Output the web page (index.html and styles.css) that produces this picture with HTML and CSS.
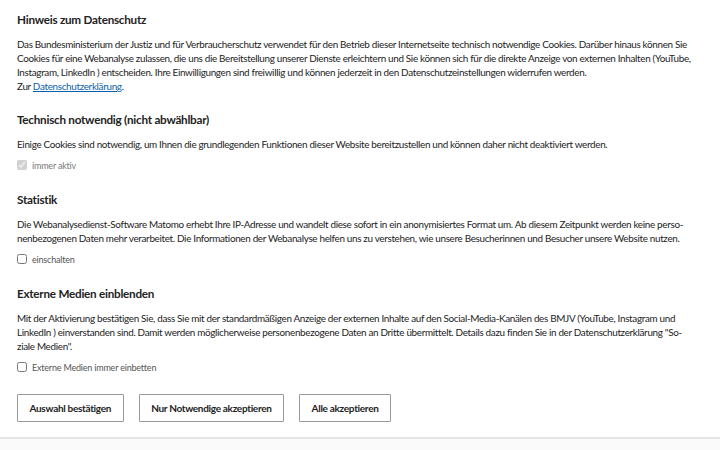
FILE: index.html
```html
<!DOCTYPE html>
<html lang="de">
<head>
    <meta charset="UTF-8">
    <meta name="viewport" content="width=device-width, initial-scale=1.0">
    <title>Hinweis zum Datenschutz</title>
    <link rel="stylesheet" href="styles.css">
</head>
<body>
    <div class="consent">
        <section class="block intro">
            <h2>Hinweis zum Datenschutz</h2>
            <p>Das Bundesministerium der Justiz und für Verbraucherschutz verwendet für den Betrieb dieser Internetseite technisch notwendige Cookies. Darüber hinaus können Sie Cookies für eine Webanalyse zulassen, die uns die Bereitstellung unserer Dienste erleichtern und Sie können sich für die direkte Anzeige von externen Inhalten (YouTube, Instagram, LinkedIn ) entscheiden. Ihre Einwilligungen sind freiwillig und können jederzeit in den Datenschutzeinstellungen widerrufen werden.<br>Zur <a href="#">Datenschutzerklärung</a>.</p>
        </section>

        <section class="block">
            <h2>Technisch notwendig (nicht abwählbar)</h2>
            <p>Einige Cookies sind notwendig, um Ihnen die grundlegenden Funktionen dieser Website bereitzustellen und können daher nicht deaktiviert werden.</p>
            <label class="check disabled"><input type="checkbox" checked disabled> immer aktiv</label>
        </section>

        <section class="block">
            <h2>Statistik</h2>
            <p>Die Webanalysedienst-Software Matomo erhebt Ihre IP-Adresse und wandelt diese sofort in ein anonymisiertes Format um. Ab diesem Zeitpunkt werden keine perso&shy;nenbezogenen Daten mehr verarbeitet. Die Informationen der Webanalyse helfen uns zu verstehen, wie unsere Besucherinnen und Besucher unsere Website nutzen.</p>
            <label class="check"><input type="checkbox"> einschalten</label>
        </section>

        <section class="block">
            <h2>Externe Medien einblenden</h2>
            <p>Mit der Aktivierung bestätigen Sie, dass Sie mit der standardmäßigen Anzeige der externen Inhalte auf den Social-Media-Kanälen des BMJV (YouTube, Instagram und LinkedIn ) einverstanden sind. Damit werden möglicherweise personenbezogene Daten an Dritte übermittelt. Details dazu finden Sie in der Datenschutzerklärung "So-<br>ziale Medien".</p>
            <label class="check"><input type="checkbox"> Externe Medien immer einbetten</label>
        </section>

        <div class="actions">
            <button>Auswahl bestätigen</button>
            <button>Nur Notwendige akzeptieren</button>
            <button>Alle akzeptieren</button>
        </div>
    </div>
    <div class="page-below"></div>
</body>
</html>
```

FILE: styles.css
```css
body {
    margin: 0;
    font-family: Lato, "Liberation Sans", sans-serif;
    color: #222;
    background: #fff;
}

.consent {
    padding: 11px 17px 15px 17px;
    border-bottom: 2px solid #e4e4e4;
}

.block {
    margin-bottom: 18px;
}

.intro p {
    margin-bottom: 6px;
}

h2 {
    font-size: 11.7px;
    letter-spacing: -0.25px;
    font-weight: 700;
    margin: 0 0 10px 0;
    line-height: 16px;
}

p {
    font-size: 9.9px;
    letter-spacing: -0.32px;
    line-height: 14px;
    margin: 0;
    max-width: 688px;
}

a {
    color: #0b5fa8;
}

.check {
    display: flex;
    align-items: center;
    gap: 5px;
    margin-top: 6px;
    font-size: 9px;
    letter-spacing: -0.2px;
    color: #555;
    height: 16px;
}

.check input {
    margin: 0;
    width: 10px;
    height: 10px;
}

.check.disabled {
    color: #777;
}

.actions {
    display: flex;
    gap: 15px;
    padding-top: 1px;
}

button {
    font-family: inherit;
    font-size: 10px;
    letter-spacing: -0.3px;
    font-weight: 700;
    color: #222;
    background: #fff;
    border: 1px solid #999;
    border-radius: 1px;
    height: 28px;
    padding: 0 11.5px;
}

.page-below {
    background: #fafafa;
    height: 20px;
}
```
